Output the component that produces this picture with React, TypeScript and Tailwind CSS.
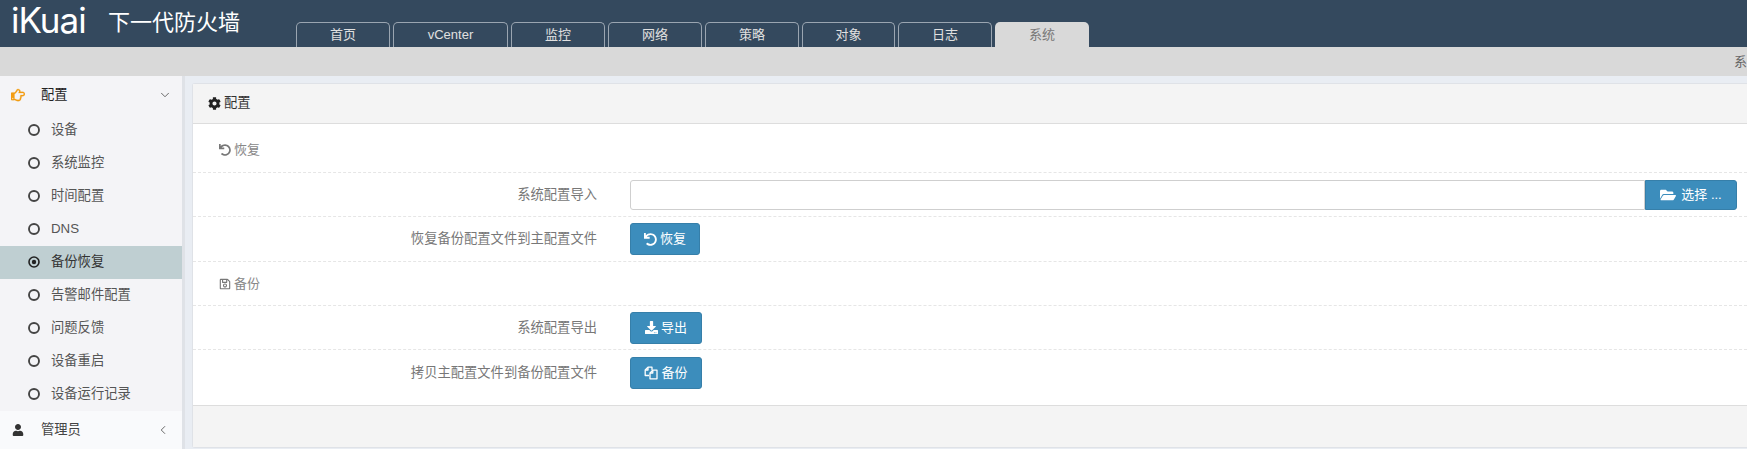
import { FaRegHandPointRight, FaCog, FaUndo, FaRegSave, FaFolderOpen, FaDownload, FaUser } from "react-icons/fa";
import { ChevronDown, ChevronLeft } from "lucide-react";
import type { ReactNode } from "react";

const tabs = [
  { label: "首页", w: "w-[94px]" },
  { label: "vCenter", w: "w-[115px]" },
  { label: "监控", w: "w-[94px]" },
  { label: "网络", w: "w-[94px]" },
  { label: "策略", w: "w-[94px]" },
  { label: "对象", w: "w-[93px]" },
  { label: "日志", w: "w-[94px]" },
];

const items = ["设备", "系统监控", "时间配置", "DNS", "备份恢复", "告警邮件配置", "问题反馈", "设备重启", "设备运行记录"];

function Ring({ dot }: { dot?: boolean }) {
  return (
    <svg viewBox="0 0 12 12" className={`h-[12px] w-[12px] ${dot ? "text-[#222]" : "text-[#444]"}`}>
      <circle cx="6" cy="6" r="5" fill="none" stroke="currentColor" strokeWidth={dot ? 1.6 : 1.9} />
      {dot && <circle cx="6" cy="6" r="2.2" fill="currentColor" />}
    </svg>
  );
}

function FilesIcon() {
  return (
    <svg viewBox="0 0 14 14" className="h-[14px] w-[14px]" fill="none" stroke="currentColor" strokeWidth="1.3" strokeLinejoin="round">
      <path d="M5 9.5H1.2V4L4 1.2h4v3" />
      <path d="M4 1.2V4H1.2" />
      <path d="M6 12.8V7l2.8-2.8h4.2v8.6z" />
      <path d="M8.8 4.2V7H6" />
    </svg>
  );
}

function Section({ icon, title, h }: { icon: ReactNode; title: string; h: string }) {
  return (
    <div className={`flex ${h} items-center gap-[3px] border-b border-dashed border-[#e6e6e6] pl-[26px] text-[13px] text-[#888]`}>
      {icon}
      <span>{title}</span>
    </div>
  );
}

function Row({ label, h, children }: { label: string; h: string; children: ReactNode }) {
  return (
    <div className={`flex ${h} items-center`}>
      <div className="w-[404px] text-right text-[13.3px] text-[#777]">{label}</div>
      <div className="ml-[33px] flex min-w-0 flex-1 pr-[10px]">{children}</div>
    </div>
  );
}

function Btn({ icon, text, w }: { icon: ReactNode; text: string; w: string }) {
  return (
    <div className={`flex h-[32px] ${w} items-center justify-center gap-[3px] rounded-[3px] border border-[#367fa9] bg-[#3c8dbc] text-[13px] text-white`}>
      {icon}
      <span>{text}</span>
    </div>
  );
}

export default function App() {
  return (
    <div className="flex h-[449px] w-[1747px] flex-col overflow-hidden bg-[#e9edf3] font-['Liberation_Sans','Noto_Sans_CJK_SC',sans-serif]">
      <header className="flex h-[47px] shrink-0 bg-[#34495e]">
        <div className="flex w-[296px] shrink-0">
          <div className="ml-[11px] mt-[1px] h-[38px] w-[86px] whitespace-nowrap font-['Inter',sans-serif] text-[35px] font-normal leading-[38px] tracking-[-1px] text-white">iKuai</div>
          <div className="ml-[11px] mt-[9px] text-[22px] leading-[28px] text-white">下一代防火墙</div>
        </div>
        <nav className="flex items-end gap-[3px]">
          {tabs.map((t) => (
            <div key={t.label} className={`flex h-[25px] ${t.w} items-center justify-center rounded-t-[5px] border border-b-0 border-[#9aa5b1] text-[13px] text-[#e0e0e0]`}>{t.label}</div>
          ))}
          <div className="flex h-[25px] w-[94px] items-center justify-center rounded-t-[5px] bg-[#d9d9d9] text-[13px] text-[#777]">系统</div>
        </nav>
      </header>
      <div className="flex h-[29px] shrink-0 items-center justify-end bg-[#d9d9d9] text-[13px] text-[#666]">
        <span>系</span>
      </div>
      <div className="flex min-h-0 flex-1">
        <aside className="flex w-[185px] shrink-0 flex-col border-r-[3px] border-[#dfe2e7] bg-[#f4f4f7]">
          <div className="flex h-[38px] items-center pb-[1px] pl-[11px] pr-[10px] text-[13.3px] text-[#222]">
            <FaRegHandPointRight className="h-[14px] w-[14px] text-[#f39c12]" stroke="currentColor" strokeWidth={8} />
            <span className="ml-[16px] flex-1">配置</span>
            <ChevronDown className="h-[14px] w-[14px] text-[#555]" strokeWidth={1.5} />
          </div>
          {items.map((it) => {
            const active = it === "备份恢复";
            return (
              <div key={it} className={`flex h-[33px] items-center pb-[1px] pl-[28px] text-[13.3px] ${active ? "bg-[#bfcfd2] text-[#333]" : "text-[#555]"}`}>
                <Ring dot={active} />
                <span className="ml-[11px]">{it}</span>
              </div>
            );
          })}
          <div className="flex flex-1 items-center bg-[#f9fafc] pl-[12px] pr-[12px] text-[13.3px] text-[#444]">
            <FaUser className="h-[12px] w-[12px] text-[#333]" />
            <span className="ml-[17px] flex-1">管理员</span>
            <ChevronLeft className="h-[14px] w-[14px] text-[#555]" strokeWidth={1.5} />
          </div>
        </aside>
        <main className="min-w-0 flex-1 pl-[7px] pt-[7px]">
          <div className="flex h-[365px] flex-col rounded-tl-[3px] rounded-bl-[3px] border border-r-0 border-[#dfe2e7] bg-white">
            <div className="flex h-[40px] shrink-0 items-center gap-[3px] border-b border-[#dddddd] bg-[#f4f4f4] pb-[1px] pl-[15px] text-[13.3px] text-[#333]">
              <FaCog className="h-[13px] w-[13px] text-[#222]" />
              <span>配置</span>
            </div>
            <Section icon={<FaUndo className="h-[12px] w-[12px] text-[#777]" />} title="恢复" h="h-[49px] pt-[4px]" />
            <div className="border-b border-dashed border-[#e6e6e6]">
              <Row label="系统配置导入" h="h-[43px]">
                <div className="h-[30px] flex-1 rounded-l-[3px] border border-[#cfcfcf] bg-white" />
                <div className="flex h-[30px] w-[92px] items-center justify-center gap-[5px] rounded-r-[3px] border border-[#367fa9] bg-[#3c8dbc] text-[13px] text-white">
                  <FaFolderOpen className="h-[16px] w-[16px]" />
                  <span>选择 ...</span>
                </div>
              </Row>
            </div>
            <div className="border-b border-dashed border-[#e6e6e6]">
              <Row label="恢复备份配置文件到主配置文件" h="h-[44px]">
                <Btn icon={<FaUndo className="h-[13px] w-[13px]" />} text="恢复" w="w-[70px]" />
              </Row>
            </div>
            <Section icon={<FaRegSave className="h-[12px] w-[12px] text-[#777]" />} title="备份" h="h-[44px]" />
            <div className="border-b border-dashed border-[#e6e6e6]">
              <Row label="系统配置导出" h="h-[43px]">
                <Btn icon={<FaDownload className="h-[13px] w-[13px]" />} text="导出" w="w-[72px]" />
              </Row>
            </div>
            <div className="h-[55px] pt-[1px]">
              <Row label="拷贝主配置文件到备份配置文件" h="h-[43px]">
                <Btn icon={<FilesIcon />} text="备份" w="w-[72px]" />
              </Row>
            </div>
            <div className="flex-1 border-t border-[#dddddd] bg-[#f4f4f4]" />
          </div>
        </main>
      </div>
    </div>
  );
}
